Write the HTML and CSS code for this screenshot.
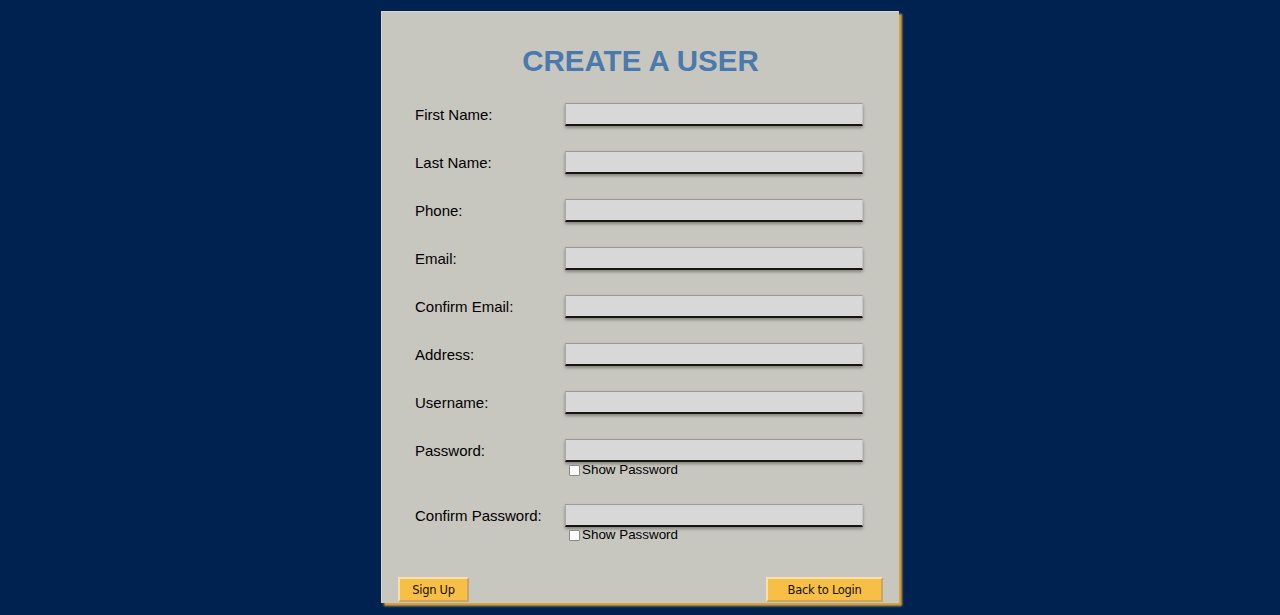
FILE: index.html
```html
<!DOCTYPE html>
<html lang="en">
<head>
<meta charset="utf-8">
<title>Create a User</title>
<link rel="stylesheet" href="styles.css">
</head>
<body>
<div class="panel">
  <h1 class="title">CREATE A USER</h1>
  <form class="form">
    <div class="row"><label class="label">First Name:</label><div class="field"><input class="input" type="text"></div></div>
    <div class="row"><label class="label">Last Name:</label><div class="field"><input class="input" type="text"></div></div>
    <div class="row"><label class="label">Phone:</label><div class="field"><input class="input" type="text"></div></div>
    <div class="row"><label class="label">Email:</label><div class="field"><input class="input" type="text"></div></div>
    <div class="row"><label class="label">Confirm Email:</label><div class="field"><input class="input" type="text"></div></div>
    <div class="row"><label class="label">Address:</label><div class="field"><input class="input" type="text"></div></div>
    <div class="row"><label class="label">Username:</label><div class="field"><input class="input" type="text"></div></div>
    <div class="row"><label class="label">Password:</label><div class="field"><input class="input" type="password"><label class="show"><input class="check" type="checkbox">Show Password</label></div></div>
    <div class="row"><label class="label">Confirm Password:</label><div class="field"><input class="input" type="password"><label class="show"><input class="check" type="checkbox">Show Password</label></div></div>
  </form>
  <div class="actions">
    <button class="btn btn-signup" type="button">Sign Up</button>
    <button class="btn btn-back" type="button">Back to Login</button>
  </div>
</div>
</body>
</html>
```
FILE: styles.css
```css
html, body {
  margin: 0;
  padding: 0;
}
body {
  background: #002250;
  font-family: "Liberation Sans", Arial, sans-serif;
  height: 615px;
  overflow: hidden;
}
.panel {
  box-sizing: border-box;
  width: 518px;
  height: 592px;
  margin: 11px auto 0;
  background: #c8c7bf;
  border-top: 1px solid #d6d5ce;
  border-left: 1px solid #d6d5ce;
  box-shadow: 3px 3px 2px #d8a640;
  padding-top: 32px;
  display: flex;
  flex-direction: column;
}
.title {
  margin: 0;
  text-align: center;
  font-size: 29.5px;
  line-height: 34px;
  font-weight: bold;
  color: #4a79ae;
}
.form {
  margin-top: 25px;
  padding-left: 33px;
  display: flex;
  flex-direction: column;
  gap: 25px;
}
.row {
  display: flex;
  align-items: flex-start;
}
.label {
  width: 150px;
  flex: none;
  font-size: 15px;
  line-height: 23px;
  color: #000;
}
.field {
  display: flex;
  flex-direction: column;
}
.input {
  box-sizing: border-box;
  width: 298px;
  height: 23px;
  margin: 0;
  padding: 0 4px;
  background: #d8d8d8;
  border-top: 1px solid #9a9a9a;
  border-left: 1px solid #a8a8a8;
  border-right: 1px solid #c4c4c4;
  border-bottom: 2px solid #151515;
  box-shadow: 0 2px 3px rgba(0, 0, 0, 0.35);
  outline: none;
}
.show {
  display: flex;
  align-items: center;
  height: 17px;
  margin-top: -1px;
  margin-bottom: 1px;
  font-size: 13.4px;
  color: #000;
}
.check {
  appearance: none;
  -webkit-appearance: none;
  box-sizing: border-box;
  width: 11px;
  height: 11px;
  margin: 1px 2px 0 4px;
  background: #fff;
  border: 1px solid #8a8a8a;
  border-radius: 1px;
}
.actions {
  margin-top: auto;
  display: flex;
  justify-content: space-between;
  padding: 0 16px 1px 16px;
}
.btn {
  box-sizing: border-box;
  height: 25px;
  margin: 0;
  padding: 0;
  background: #f8bf47;
  border-top: 2px solid #f6e1b0;
  border-left: 2px solid #f6e1b0;
  border-right: 2px solid #c9a463;
  border-bottom: 2px solid #c9a463;
  font-family: "DejaVu Sans", Verdana, sans-serif;
  font-size: 11.5px;
  letter-spacing: -0.3px;
  color: #111;
}
.btn-signup {
  width: 71px;
}
.btn-back {
  width: 117px;
}
```
